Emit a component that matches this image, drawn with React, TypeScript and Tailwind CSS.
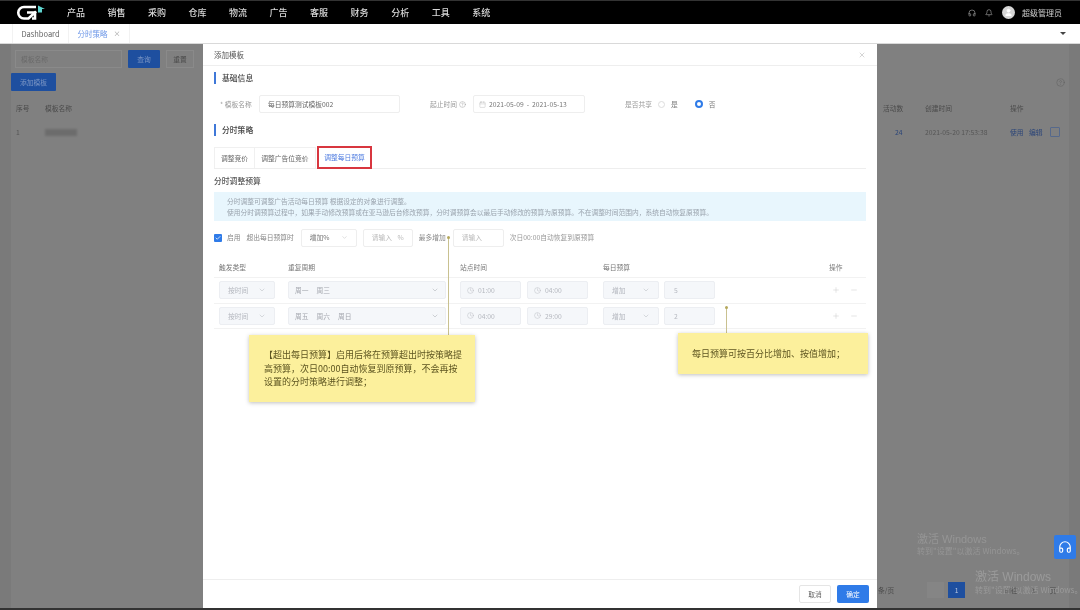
import React from 'react';
import { Bell, ChevronDown, Clock, Headphones, HelpCircle, Calendar, Check, Plus, Minus, X, User } from 'lucide-react';

const navItems = ['产品', '销售', '采购', '仓库', '物流', '广告', '客服', '财务', '分析', '工具', '系统'];

const rows = [
  { days: ['周一', '周三'], from: '01:00', to: '04:00', value: '5' },
  { days: ['周五', '周六', '周日'], from: '04:00', to: '29:00', value: '2' },
];

const SectionTitle: React.FC<{ children: React.ReactNode }> = ({ children }) => (
  <div className="flex items-center gap-[6px] h-[12px]">
    <span className="w-[2px] h-[12px] bg-[#3f78d8]" />
    <span className="text-[7.8px] font-medium text-[#444]">{children}</span>
  </div>
);

const DisabledSelect: React.FC<{ label: string }> = ({ label }) => (
  <div className="w-[56px] h-[18px] bg-[#f5f7fa] border border-[#eceef2] rounded-[2px] flex items-center justify-between px-[8px] text-[6.75px] text-[#b5b8bf]">
    <span>{label}</span>
    <ChevronDown size={8} strokeWidth={1.5} />
  </div>
);

const TimeBox: React.FC<{ time: string }> = ({ time }) => (
  <div className="w-[61px] h-[18px] bg-[#f5f7fa] border border-[#eceef2] rounded-[2px] flex items-center gap-[4px] px-[6px] text-[6.75px] text-[#b5b8bf]">
    <Clock size={7} strokeWidth={1.5} />
    <span>{time}</span>
  </div>
);

const Modal: React.FC = () => (
  <div className="absolute left-[203px] top-[44px] w-[674px] h-[564px] bg-white flex flex-col">
    <div className="h-[22px] shrink-0 border-b border-[#eeeeee] flex items-center justify-between pl-[11px] pr-[11px]">
      <span className="text-[7.5px] text-[#555]">添加模板</span>
      <X size={8} strokeWidth={1.5} className="text-[#aaa]" />
    </div>

    <div className="flex-1 px-[11px] pt-[6px]">
      <SectionTitle>基础信息</SectionTitle>

      <div className="flex items-center mt-[11px] h-[18px] text-[6.75px] text-[#999]">
        <span className="w-[40px] pl-[6px] whitespace-nowrap">* 模板名称</span>
        <div className="w-[141px] h-[18px] ml-[5px] border border-[#eeeeee] rounded-[2px] flex items-center px-[8px] text-[#666]">
          每日预算测试模板002
        </div>
        <span className="ml-[30px] flex items-center gap-[2px] whitespace-nowrap">
          起止时间 <HelpCircle size={7} strokeWidth={1.5} />
        </span>
        <div className="w-[112px] h-[18px] ml-[7px] border border-[#eeeeee] rounded-[2px] flex items-center gap-[3px] px-[5px] text-[#777] whitespace-nowrap">
          <Calendar size={7} strokeWidth={1.5} className="text-[#bbb]" />
          2021-05-09 &nbsp;-&nbsp; 2021-05-13
        </div>
        <span className="ml-[40px] whitespace-nowrap">是否共享</span>
        <span className="ml-[6px] w-[7px] h-[7px] rounded-full border border-[#ddd]" />
        <span className="ml-[6px] text-[#777]">是</span>
        <span className="ml-[17px] w-[8px] h-[8px] rounded-full border-[2.5px] border-[#2f7be8] bg-white" />
        <span className="ml-[6px] text-[#777]">否</span>
      </div>

      <div className="mt-[11px]">
        <SectionTitle>分时策略</SectionTitle>
      </div>

      <div className="mt-[11px] h-[22px] border-b border-[#eeeeee] flex items-stretch text-[6.75px] text-[#666]">
        <div className="w-[41px] flex items-center justify-center border border-[#f0f0f0] border-b-0">调整竞价</div>
        <div className="w-[61px] flex items-center justify-center border-t border-r border-[#f0f0f0]">调整广告位竞价</div>
        <div className="w-[55px] flex items-center justify-center border-2 border-[#d8363f] text-[#4d7be0] h-[23px] ml-[1px] -mt-[1px] bg-white">
          调整每日预算
        </div>
      </div>

      <div className="mt-[6px] text-[7.8px] text-[#555] font-medium leading-[11px]">分时调整预算</div>

      <div className="mt-[6px] h-[29px] bg-[#e8f6fd] pl-[13px] flex flex-col justify-center text-[6.75px] leading-[10.5px] text-[#9aa3ad]">
        <div>分时调整可调整广告活动每日预算 根据设定的对象进行调整。</div>
        <div>使用分时调预算过程中，如果手动修改预算或在亚马逊后台修改预算，分时调预算会以最后手动修改的预算为原预算。不在调整时间范围内，系统自动恢复原预算。</div>
      </div>

      <div className="mt-[7px] h-[19px] flex items-center text-[6.75px] text-[#888] whitespace-nowrap">
        <span className="w-[8px] h-[8px] rounded-[1px] bg-[#2f7be8] flex items-center justify-center">
          <Check size={6} strokeWidth={3} className="text-white" />
        </span>
        <span className="ml-[5px]">启用</span>
        <span className="ml-[6px]">超出每日预算时</span>
        <div className="ml-[7px] w-[56px] h-[18px] border border-[#eeeeee] rounded-[2px] flex items-center justify-between px-[8px] text-[#777]">
          增加%
          <ChevronDown size={7} strokeWidth={1.5} className="text-[#bbb]" />
        </div>
        <div className="ml-[6px] w-[50px] h-[18px] border border-[#eeeeee] rounded-[2px] flex items-center justify-between px-[8px] text-[#bbb]">
          请输入
          <span>%</span>
        </div>
        <span className="ml-[6px]">最多增加</span>
        <div className="ml-[7px] w-[51px] h-[18px] border border-[#eeeeee] rounded-[2px] flex items-center px-[8px] text-[#bbb]">
          请输入
        </div>
        <span className="ml-[6px] text-[#999]">次日00:00自动恢复到原预算</span>
      </div>

      <div className="mt-[15px] h-[11px] flex items-center text-[6.75px] text-[#777] pl-[5px]">
        <span className="w-[69px]">触发类型</span>
        <span className="w-[172px]">重复周期</span>
        <span className="w-[143px]">站点时间</span>
        <span className="w-[226px]">每日预算</span>
        <span>操作</span>
      </div>

      <div className="mt-[4px] border-t border-[#f2f2f2] text-[#c8c8c8]">
        {rows.map((row) => (
          <div key={row.value} className="h-[25.5px] border-b border-[#f2f2f2] flex items-center pl-[5px]">
            <DisabledSelect label="按时间" />
            <div className="w-[158px] h-[18px] ml-[13px] bg-[#f5f7fa] border border-[#eceef2] rounded-[2px] flex items-center justify-between px-[6px] text-[6.75px] text-[#a5a8af]">
              <span className="flex gap-[8px]">
                {row.days.map((day) => (
                  <span key={day}>{day}</span>
                ))}
              </span>
              <ChevronDown size={8} strokeWidth={1.5} />
            </div>
            <div className="ml-[14px]">
              <TimeBox time={row.from} />
            </div>
            <div className="ml-[6px]">
              <TimeBox time={row.to} />
            </div>
            <div className="ml-[15px]">
              <DisabledSelect label="增加" />
            </div>
            <div className="ml-[5px] w-[51px] h-[18px] bg-[#f5f7fa] border border-[#eceef2] rounded-[2px] flex items-center px-[9px] text-[6.75px] text-[#b5b8bf]">
              {row.value}
            </div>
            <div className="ml-auto mr-[8px] flex gap-[10px]">
              <Plus size={8} strokeWidth={1.5} />
              <Minus size={8} strokeWidth={1.5} />
            </div>
          </div>
        ))}
      </div>
    </div>

    <div className="h-[29px] shrink-0 border-t border-[#eeeeee] flex items-center justify-end gap-[6px] pr-[8px]">
      <div className="w-[32px] h-[18px] border border-[#e5e5e5] rounded-[2px] flex items-center justify-center text-[6.75px] text-[#666]">取消</div>
      <div className="w-[32px] h-[18px] bg-[#2f7be8] rounded-[2px] flex items-center justify-center text-[6.75px] text-white">确定</div>
    </div>
  </div>
);

const Note: React.FC<{ className: string; children: React.ReactNode }> = ({ className, children }) => (
  <div className={`absolute bg-[#fcf09c] shadow-[0_1px_4px_rgba(0,0,0,0.25)] text-[#5c5420] text-[9px] leading-[13.5px] ${className}`}>
    {children}
  </div>
);

const App: React.FC = () => (
  <div className="relative w-[1080px] h-[610px] overflow-hidden bg-[#7a7a7a] blur-[0.35px] font-['Noto_Sans_CJK_SC','Noto_Sans',sans-serif]">
    <div className="h-[24px] bg-black border-t border-[#333] flex items-center">
      <svg width="30" height="18" viewBox="0 0 30 18" className="ml-[16px]">
        <path d="M20 3 H8 A5.5 5.5 0 0 0 8 14.5 H12.5 L20 7.5" fill="none" stroke="#fff" strokeWidth="2.6" />
        <path d="M11 8.5 H19 V14.5 H16" fill="none" stroke="#fff" strokeWidth="2.6" />
        <path d="M22 1.5 L29 5 H26 V8.5 H22 Z" fill="#5fd4cf" />
      </svg>
      <nav className="ml-[21px] flex gap-[22.5px] text-[9px] font-medium text-[#d8d8d8]">
        {navItems.map((item) => (
          <span key={item}>{item}</span>
        ))}
      </nav>
      <div className="ml-auto flex items-center pr-[18px] text-[#cfcfcf]">
        <Headphones size={8} strokeWidth={1.5} />
        <Bell size={8} strokeWidth={1.5} className="ml-[9px]" />
        <span className="ml-[9px] w-[13px] h-[13px] rounded-full bg-[#d5d5d5] flex items-center justify-center">
          <User size={9} className="text-white" fill="white" />
        </span>
        <span className="ml-[7px] text-[8px]">超级管理员</span>
      </div>
    </div>

    <div className="h-[20px] bg-white border-b-[1.5px] border-[#d9d9d9] flex items-stretch pl-[12px] pr-[14px] text-[7.5px]">
      <div className="w-[57px] flex items-center justify-center text-[#666] border-x border-[#f2f2f2]">Dashboard</div>
      <div className="w-[61px] flex items-center justify-center gap-[6px] text-[#6d97e8] border-r border-[#f2f2f2]">
        分时策略 <span className="text-[#999] text-[7px]">×</span>
      </div>
      <span className="ml-auto self-center w-0 h-0 border-x-[3px] border-x-transparent border-t-[3px] border-t-[#444]" />
    </div>

    {/* page behind the dialog, dimmed */}
    <div className="w-[1058px] h-[564px] ml-[11px] pt-[6px] bg-[#808080] text-[6.75px] text-[#4a4a4a]">
      <div className="flex items-center h-[18px] ml-[4px] gap-[6px]">
        <div className="w-[107px] h-[18px] border border-[#8a8a8a] px-[5px] flex items-center text-[#6a6a6a]">模板名称</div>
        <div className="w-[32px] h-[18px] bg-[#1e4f9f] rounded-[1px] flex items-center justify-center text-[#7d97c5]">查询</div>
        <div className="w-[28px] h-[18px] border border-[#8a8a8a] flex items-center justify-center">重置</div>
      </div>
      <div className="flex items-center justify-between mt-[5px] pr-[4px]">
        <div className="w-[45px] h-[18px] bg-[#1e4f9f] rounded-[1px] flex items-center justify-center text-[#7d97c5]">添加模板</div>
        <HelpCircle size={9} strokeWidth={1} className="text-[#555]" />
      </div>
      <div className="flex items-center mt-[11px] pl-[5px] h-[12px]">
        <span className="w-[29px]">序号</span>
        <span className="w-[838px]">模板名称</span>
        <span className="w-[42px]">活动数</span>
        <span className="w-[85px]">创建时间</span>
        <span>操作</span>
      </div>
      <div className="flex items-center mt-[12px] pl-[5px] h-[12px] text-[#555] whitespace-nowrap">
        <span className="w-[29px]">1</span>
        <span className="w-[838px]">
          <span className="block w-[32px] h-[7px] bg-[#6c6c6c] blur-[1px]" />
        </span>
        <span className="w-[42px] pl-[12px] text-[#2a4478]">24</span>
        <span className="w-[85px]">2021-05-20 17:53:38</span>
        <span className="w-[19px] text-[#2a4478]">使用</span>
        <span className="w-[21px] text-[#2a4478]">编辑</span>
        <span className="w-[10px] h-[10px] border border-[#56698c] rounded-[1px]" />
      </div>
    </div>

    <div className="absolute left-[1054px] top-[535px] w-[22px] h-[24px] bg-[#2f7be8] rounded-[2px] flex items-center justify-center">
      <Headphones size={14} strokeWidth={2} className="text-white" />
    </div>
    <div className="absolute left-[917px] top-[534px] text-[#959595] leading-none">
      <div className="text-[11px] font-['Liberation_Sans','Noto_Sans_CJK_SC',sans-serif]">激活 Windows</div>
      <div className="text-[8px] mt-[2px]">转到"设置"以激活 Windows。</div>
    </div>
    <div className="absolute left-[878px] top-[582px] h-[16px] flex items-center text-[6.75px] text-[#4a4a4a] whitespace-nowrap">
      <span>条/页</span>
      <span className="ml-[33px] w-[17px] h-[16px] bg-[#858585]" />
      <span className="ml-[4px] w-[17px] h-[16px] bg-[#1e4f9f] text-[#b8c6e0] flex items-center justify-center">1</span>
      <span className="ml-[39px]">前往</span>
      <span className="ml-[14px]">1</span>
      <span className="ml-[14px]">页</span>
    </div>
    <div className="absolute left-[975px] top-[571px] text-[#9a9a9a] leading-none whitespace-nowrap">
      <div className="text-[12px] font-['Liberation_Sans','Noto_Sans_CJK_SC',sans-serif]">激活 Windows</div>
      <div className="text-[8px] mt-[3px]">转到"设置"以激活 Windows。</div>
    </div>
    <div className="absolute left-0 bottom-0 w-full h-[2px] bg-[#333]" />

    <Modal />

    <div className="absolute left-[448px] top-[237px] w-px h-[103px] bg-[#c9c190]" />
    <span className="absolute left-[447px] top-[236px] w-[3px] h-[3px] rounded-full bg-[#b5a85c]" />
    <Note className="left-[249px] top-[335px] w-[226px] h-[67px] pl-[15px] pr-[12px] pt-[13px]">
      【超出每日预算】启用后将在预算超出时按策略提高预算，次日00:00自动恢复到原预算，不会再按设置的分时策略进行调整；
    </Note>
    <div className="absolute left-[726px] top-[307px] w-px h-[30px] bg-[#c9c190]" />
    <span className="absolute left-[725px] top-[306px] w-[3px] h-[3px] rounded-full bg-[#b5a85c]" />
    <Note className="left-[678px] top-[333px] w-[190px] h-[41px] pl-[14px] flex items-center">
      每日预算可按百分比增加、按值增加；
    </Note>
  </div>
);

export default App;
